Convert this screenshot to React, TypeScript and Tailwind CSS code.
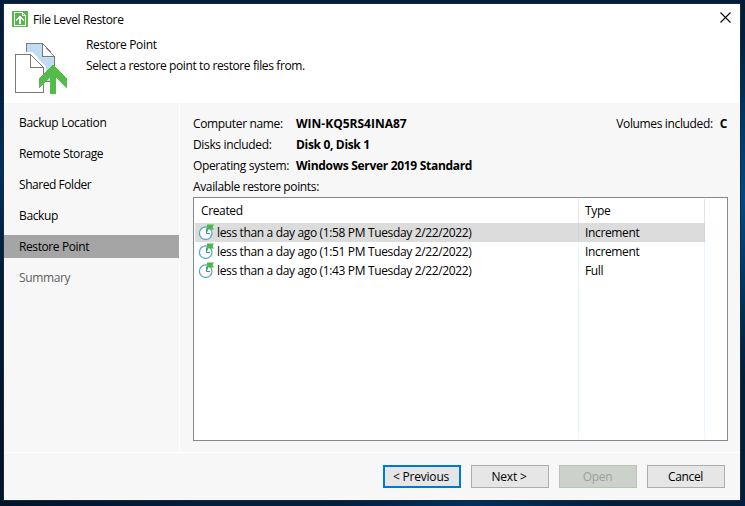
const steps = [
  { label: 'Backup Location', tracking: 'tracking-[-0.3px]' },
  { label: 'Remote Storage', tracking: 'tracking-[-0.38px]' },
  { label: 'Shared Folder', tracking: 'tracking-[-0.45px]' },
  { label: 'Backup', tracking: 'tracking-[-0.35px]' },
  { label: 'Restore Point', tracking: 'tracking-[-0.4px]', active: true },
  { label: 'Summary', tracking: 'tracking-[-0.38px]', muted: true },
];

const points = [
  { created: 'less than a day ago (1:58 PM Tuesday 2/22/2022)', type: 'Increment', selected: true },
  { created: 'less than a day ago (1:51 PM Tuesday 2/22/2022)', type: 'Increment' },
  { created: 'less than a day ago (1:43 PM Tuesday 2/22/2022)', type: 'Full' },
];

function AppIcon() {
  return (
    <svg width="16" height="16" viewBox="0 0 16 16" shapeRendering="crispEdges" className="mb-[3px]">
      <path fill="#54b948" d="M0 0h16v16H0z" />
      <path fill="none" stroke="#fff" d="M2.5 1.5h8l3 3v10h-11z" />
      <path fill="#fff" d="M10 1h1v3h3v1h-4z" />
      <path fill="#fff" d="M7 5h2v1h1v1h1v1h1v2h-1V9h-1V8H9v5H7V8H6v1H5v1H4V8h1V7h1V6h1z" />
    </svg>
  );
}

function FilesIcon() {
  return (
    <svg width="54" height="52" viewBox="0 0 54 52" shapeRendering="crispEdges">
      <path d="M11.5 .5h16l12 13v25h-28z" fill="#bfdcf1" stroke="#7a7a7a" />
      <path d="M27.5 .5v13h12z" fill="#fff" stroke="#7a7a7a" />
      <path d="M0 10h17l13 14v26H0z" fill="#fff" stroke="#fff" strokeWidth="2" />
      <path d="M.5 11.5h15l13 13v25H.5z" fill="#fff" stroke="#7a7a7a" />
      <path d="M15.5 11.5v13h13" fill="none" stroke="#7a7a7a" />
      <path d="M24 35L38 22l14 13v10l-11-10v16h-6V35l-11 10z" fill="#54bd49" />
    </svg>
  );
}

function PointIcon() {
  return (
    <svg width="16" height="17" viewBox="0 0 16 17" className="-mt-px shrink-0">
      <circle cx="7.700" cy="9.200" r="6.300" fill="#fff" stroke="#5ba7d0" strokeWidth="1.300" />
      <path d="M8.500 4.500v5H12" fill="none" stroke="#4a86a8" />
      <path d="M9 .5h7L14.500 3l1.500 2.500H10V7.500H9z" fill="#4cb848" />
    </svg>
  );
}

function Detail({ name, value, tracking }: { name: string; value: string; tracking: string }) {
  return (
    <div className="flex h-[21px]">
      <span className="w-[103px] tracking-[-0.35px]">{name}</span>
      <span className={`font-bold ${tracking}`}>{value}</span>
    </div>
  );
}

const button = 'flex h-[23px] w-[78px] items-center justify-center pt-px';

export default function App() {
  return (
    <div className="h-[506px] w-[745px] overflow-hidden bg-[#001d3d] bg-[radial-gradient(circle_at_745px_200px,#004a8c_0px,transparent_180px),radial-gradient(circle_at_0px_170px,#003260_0px,transparent_90px),radial-gradient(circle_at_470px_506px,#003060_0px,transparent_150px),radial-gradient(circle_at_0px_460px,#001228_0px,transparent_200px)] p-1 font-['Open_Sans','Noto_Sans',sans-serif] text-[12px] leading-[16px] tracking-[-0.36px] whitespace-nowrap text-black">
      <div className="flex h-[496px] w-[736px] flex-col bg-[#f7f7f7] outline outline-1 outline-[#1b2930]">
        <header className="h-[99px] bg-white">
          <div className="flex h-8 items-center justify-between pt-[2px] pr-[9px] pl-2">
            <div className="flex items-center gap-[5px] pb-px">
              <AppIcon />
              <span className="pb-[2px]">File Level Restore</span>
            </div>
            <svg width="11" height="11" viewBox="0 0 11 11" className="mb-[7px]">
              <path d="M.5.5l10 10m0-10l-10 10" stroke="#000" strokeWidth="1.1" />
            </svg>
          </div>
          <div className="flex pt-[1px] pl-[11px]">
            <div className="pt-[6px]"><FilesIcon /></div>
            <div className="flex flex-col gap-[5px] pl-[17px]">
              <span>Restore Point</span>
              <span className="tracking-[-0.39px]">Select a restore point to restore files from.</span>
            </div>
          </div>
        </header>
        <div className="flex h-[350px] border-b border-white">
          <nav className="flex w-[176px] flex-col gap-2 border-r border-white pt-2">
            {steps.map((s) => (
              <div
                key={s.label}
                className={`flex h-[23px] items-center pt-px pl-[15px] ${s.tracking} ${s.active ? 'bg-[#a5a5a5]' : ''} ${s.muted ? 'text-[#606060]' : ''}`}
              >
                {s.label}
              </div>
            ))}
          </nav>
          <main className="flex-1 pt-[13px] pl-[13px]">
            <div className="flex justify-between pr-[13px]">
              <Detail name="Computer name:" value="WIN-KQ5RS4INA87" tracking="tracking-[0px]" />
              <div className="flex gap-[7px]">
                <span>Volumes included:</span>
                <span className="font-bold">C</span>
              </div>
            </div>
            <Detail name="Disks included:" value="Disk 0, Disk 1" tracking="tracking-[-0.33px]" />
            <Detail name="Operating system:" value="Windows Server 2019 Standard" tracking="tracking-[-0.3px]" />
            <div className="h-[18px]">Available restore points:</div>
            <section className="h-[244px] w-[535px] border border-[#828790] bg-white p-px">
              <div className="grid h-full w-[510px] grid-cols-[384px_126px] grid-rows-[24px_19px_19px_19px_1fr]">
                <div className="border-r border-[#e2e4e5] pt-[4px] pl-[6px]">Created</div>
                <div className="border-r border-[#e2e4e5] pt-[4px] pl-[6px]">Type</div>
                {points.map((p) => (
                  <div key={p.created} className={`col-span-2 grid grid-cols-subgrid ${p.selected ? 'bg-[#dcdcdc]' : ''}`}>
                    <div className={`flex h-[19px] gap-[3px] border-r pt-[2px] pl-[3px] tracking-[-0.35px] ${p.selected ? 'border-[#ccd5da]' : 'border-[#e8f6fd]'}`}>
                      <PointIcon />
                      <span>{p.created}</span>
                    </div>
                    <div className={`h-[19px] border-r pt-[2px] pl-[6px] ${p.selected ? 'border-[#ccd5da]' : 'border-[#e8f6fd]'}`}>{p.type}</div>
                  </div>
                ))}
                <div className="border-r border-[#e8f6fd]" />
                <div className="border-r border-[#e8f6fd]" />
              </div>
            </section>
          </main>
        </div>
        <footer className="flex justify-end gap-[10px] pt-3 pr-[15px]">
          <button className={`${button} border-2 border-[#0078d7] bg-[#e6e6e6] pr-[2px] tracking-[-0.2px]`}>&lt; Previous</button>
          <button className={`${button} border border-[#adadad] bg-[#e6e6e6] pr-[2px] tracking-[-0.2px]`}>Next &gt;</button>
          <button className={`${button} border border-[#bfbfbf] bg-[#ccd1cc] pr-px text-[#a0a0a0]`}>Open</button>
          <button className={`${button} border border-[#adadad] bg-[#e6e6e6] pr-px`}>Cancel</button>
        </footer>
      </div>
    </div>
  );
}
